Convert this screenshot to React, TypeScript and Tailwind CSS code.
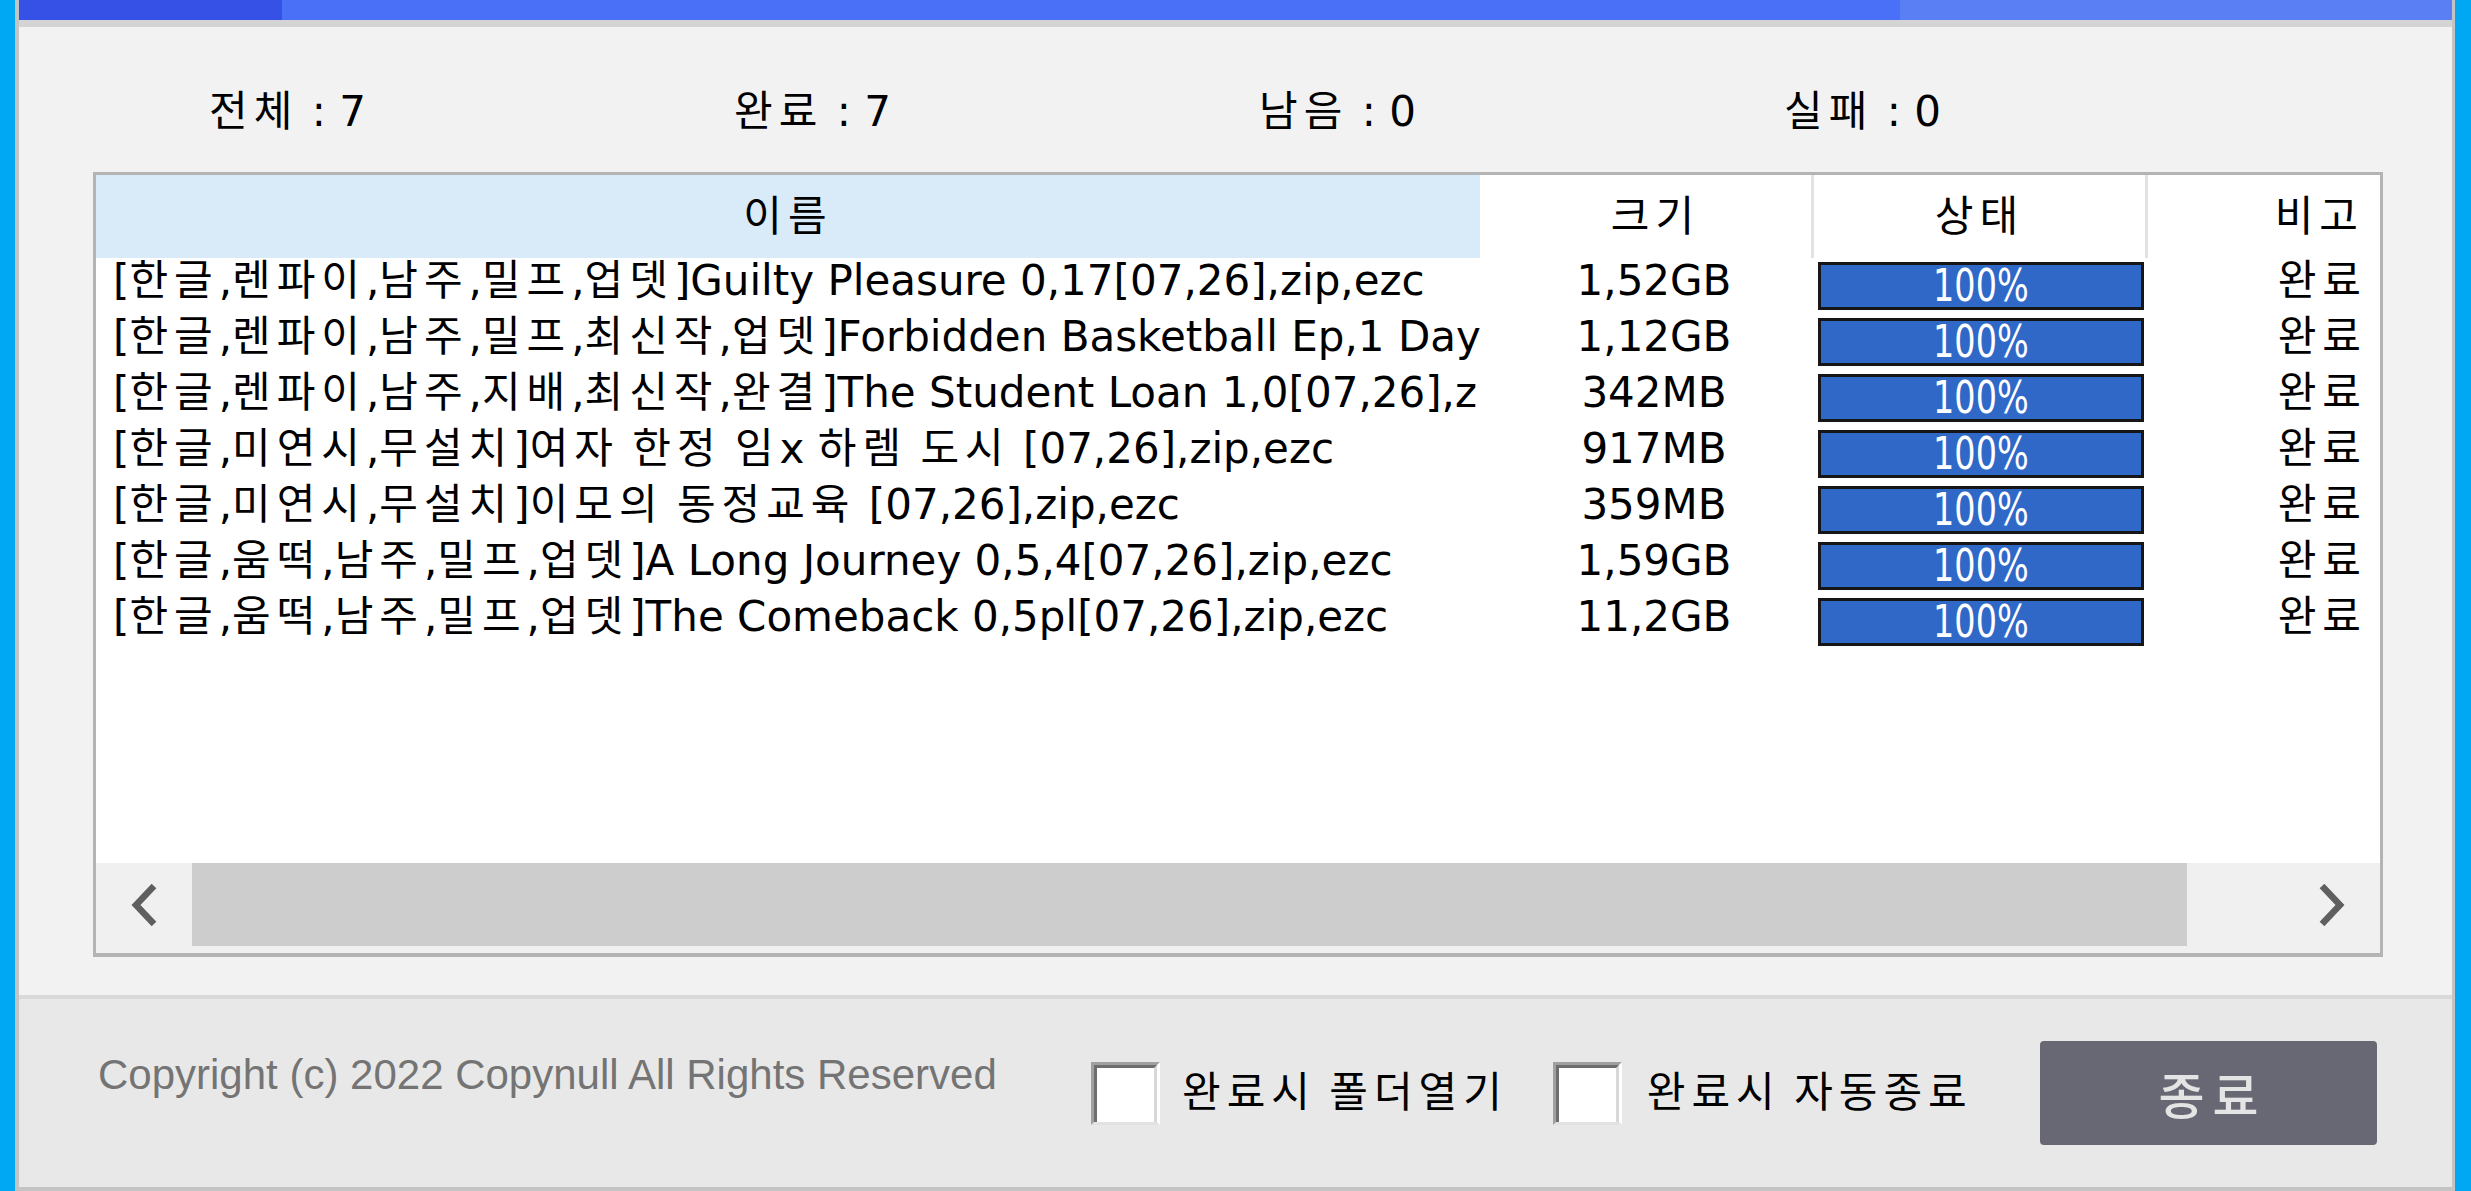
interface Item {
  name: string
  size: string
}

const items: Item[] = [
  { name: '[한글,렌파이,남주,밀프,업뎃]Guilty Pleasure 0,17[07,26],zip,ezc', size: '1,52GB' },
  { name: '[한글,렌파이,남주,밀프,최신작,업뎃]Forbidden Basketball Ep,1 Day 1[07,26],zip,ezc', size: '1,12GB' },
  { name: '[한글,렌파이,남주,지배,최신작,완결]The Student Loan 1,0[07,26],zip,ezc', size: '342MB' },
  { name: '[한글,미연시,무설치]여자 한정 임x 하렘 도시 [07,26],zip,ezc', size: '917MB' },
  { name: '[한글,미연시,무설치]이모의 동정교육 [07,26],zip,ezc', size: '359MB' },
  { name: '[한글,움떡,남주,밀프,업뎃]A Long Journey 0,5,4[07,26],zip,ezc', size: '1,59GB' },
  { name: '[한글,움떡,남주,밀프,업뎃]The Comeback 0,5pl[07,26],zip,ezc', size: '11,2GB' },
]

const stats = [
  { label: '전체', value: 7 },
  { label: '완료', value: 7 },
  { label: '남음', value: 0 },
  { label: '실패', value: 0 },
]

function Ko({ text }: { text: string }) {
  return (
    <>
      {text.split(/([가-힣]+)/).map((part, i) =>
        /[가-힣]/.test(part) ? (
          <span key={i} className="tracking-[6px]">{part}</span>
        ) : (
          part
        ),
      )}
    </>
  )
}

function Checkbox() {
  return (
    <div className="flex flex-col w-[69px] h-[63px] border-t-[3px] border-l-[3px] border-[#a0a0a0] border-r-[3px] border-r-white border-b-[3px] border-b-[#e2e2e2]">
      <div className="flex-1 bg-white border-t-[3px] border-l-[3px] border-[#6e6e6e] border-r-[3px] border-r-[#d8d8d8]" />
    </div>
  )
}

function ProgressBar({ value }: { value: number }) {
  return (
    <div className="mt-[4px] ml-[4px] w-[326px] h-[48px] border-[3px] border-[#161616] bg-[#3068c8] flex items-center justify-center text-white text-[44px] leading-none">
      <span className="inline-block scale-x-[0.76]">{value}%</span>
    </div>
  )
}

function Chevron({ dir }: { dir: 'left' | 'right' }) {
  return (
    <svg width="34" height="42" viewBox="0 0 34 42" className="text-[#5f5f5f]">
      <polyline
        points={dir === 'left' ? '27,2 9,21 27,40' : '7,2 25,21 7,40'}
        fill="none"
        stroke="currentColor"
        strokeWidth="6.5"
        strokeLinejoin="miter"
      />
    </svg>
  )
}

export default function App() {
  return (
    <div className="w-[2471px] h-[1191px] flex bg-[#00a8f3] font-['DejaVu_Sans','Noto_Sans_CJK_KR',sans-serif] text-black overflow-hidden">
      <div className="w-[15px] shrink-0" />
      <div className="w-[4px] shrink-0 bg-[#c4c4c4]" />

      <div className="flex-1 flex flex-col">
        {/* title strip */}
        <div className="h-[20px] flex">
          <div className="w-[263px] bg-[#3551e6]" />
          <div className="flex-1 bg-[#4b70f8]" />
          <div className="w-[552px] bg-[#5a7ff4]" />
        </div>
        <div className="h-[7px] bg-[#d4d4d4]" />

        {/* body */}
        <div className="h-[968px] bg-[#f2f2f2] flex flex-col">
          <div className="flex pl-[190px] pt-[64px] h-[145px] text-[42px] leading-[42px]">
            {stats.map((s) => (
              <div key={s.label} className="w-[525px] whitespace-pre">
                <Ko text={`${s.label} : ${s.value}`} />
              </div>
            ))}
          </div>

          <div className="ml-[74px] mr-[69px] h-[785px] flex flex-col border-[3px] border-b-[4px] border-[#b4b4b4] bg-white">
            <div className="h-[83px] flex text-[42px] leading-none">
              <div className="w-[1384px] bg-[#d9eaf8] flex items-center justify-center"><Ko text="이름" /></div>
              <div className="w-[334px] flex items-center justify-center pl-[20px] border-r-[3px] border-[#e2e2e2]"><Ko text="크기" /></div>
              <div className="w-[334px] flex items-center justify-center border-r-[3px] border-[#e2e2e2]"><Ko text="상태" /></div>
              <div className="flex-1 flex items-center justify-end pr-[16px]"><Ko text="비고" /></div>
            </div>

            <div className="flex-1 flex flex-col">
              {items.map((it) => (
                <div key={it.name} className="h-[56px] flex text-[42px] leading-[46px]">
                  <div className="w-[1384px] pl-[17px] whitespace-pre overflow-x-clip">
                    <Ko text={it.name} />
                  </div>
                  <div className="w-[334px] pl-[14px] text-center">{it.size}</div>
                  <div className="w-[334px]">
                    <ProgressBar value={100} />
                  </div>
                  <div className="flex-1 text-right pr-[13px]"><Ko text="완료" /></div>
                </div>
              ))}
            </div>

            {/* horizontal scrollbar */}
            <div className="h-[90px] bg-[#f0f0f0] flex items-start">
              <div className="w-[96px] h-[83px] flex items-center justify-center">
                <Chevron dir="left" />
              </div>
              <div className="w-[1995px] h-[83px] bg-[#cdcdcd]" />
              <div className="flex-1" />
              <div className="w-[96px] h-[83px] flex items-center justify-center">
                <Chevron dir="right" />
              </div>
            </div>
          </div>
        </div>

        <div className="h-[4px] bg-[#d9d9d9]" />

        {/* footer */}
        <div className="h-[188px] bg-[#e8e8e8] flex items-center pl-[79px] pr-[75px]">
          <div className="w-[993px] pb-[36px] text-[42px] leading-none text-[#747474] font-['Liberation_Sans',sans-serif] whitespace-nowrap">
            Copyright (c) 2022 Copynull All Rights Reserved
          </div>
          <Checkbox />
          <div className="ml-[22px] text-[42px] leading-none whitespace-pre"><Ko text="완료시 폴더열기" /></div>
          <div className="ml-[45px]">
            <Checkbox />
          </div>
          <div className="ml-[25px] text-[42px] leading-none whitespace-pre"><Ko text="완료시 자동종료" /></div>
          <button className="ml-auto w-[337px] h-[104px] rounded-[4px] bg-[#686874] text-[#e4e4e4] text-[50px] font-medium tracking-[8px] pl-[8px] font-['Noto_Sans_CJK_KR',sans-serif] flex items-center justify-center">
            종료
          </button>
        </div>
        <div className="h-[4px] bg-[#c4c4c4]" />
      </div>

      <div className="w-[3px] shrink-0 bg-[#c4c4c4]" />
      <div className="w-[16px] shrink-0" />
    </div>
  )
}
